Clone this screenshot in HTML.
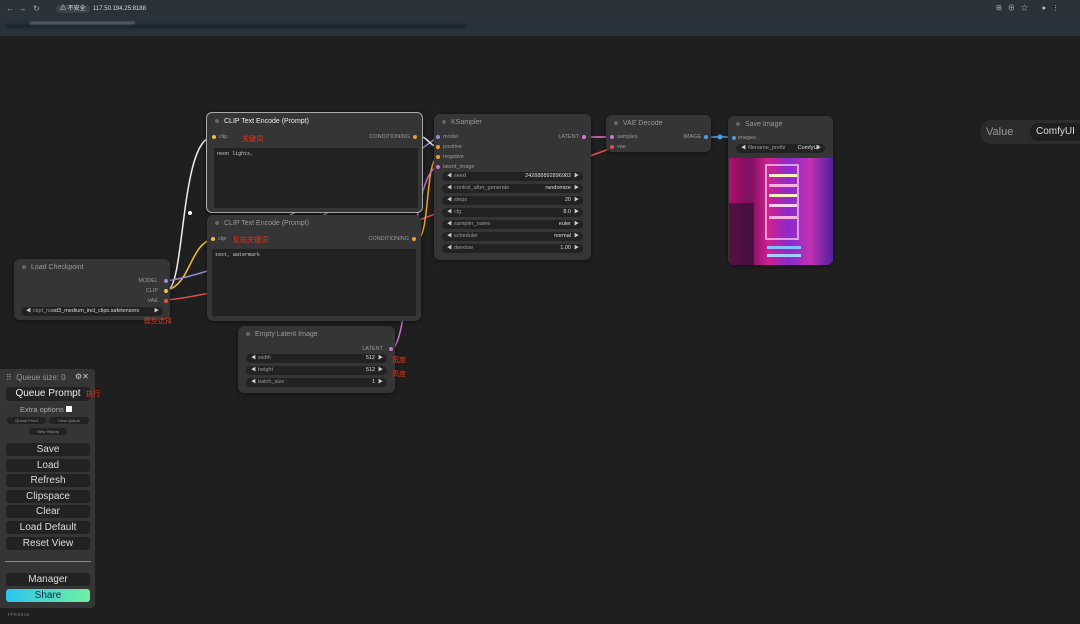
<!DOCTYPE html>
<html><head><meta charset="utf-8"><style>
*{box-sizing:border-box;margin:0;padding:0}
body{width:1080px;height:624px;overflow:hidden;background:#1f1f1f;font-family:"Liberation Sans","Noto Sans CJK SC",sans-serif;position:relative;color:#aaa}
.a{position:absolute}
.node{position:absolute;background:#353535;border-radius:6px;box-shadow:0 1px 4px rgba(0,0,0,.5)}
.t{position:absolute;left:8px;top:5px;font-size:7px;color:#999;white-space:nowrap}
.t:before{content:"";display:inline-block;width:4px;height:4px;border-radius:50%;background:#666;margin-right:5px;vertical-align:middle}
.s{position:absolute;font-size:5.5px;color:#999;white-space:nowrap}
.d{position:absolute;width:4px;height:4px;border-radius:50%}
.w{position:absolute;height:9px;background:#222;border-radius:5px;font-size:5.5px;color:#999;line-height:9px;padding:0 5px}
.w b{position:absolute;right:12px;font-weight:normal;color:#ddd}
.w:before{content:"◀";font-size:5px;margin-right:2px;color:#ccc}
.w:after{content:"▶";position:absolute;right:4px;font-size:5px;color:#ccc}
.ta{position:absolute;background:#222;font-family:"Liberation Mono",monospace;font-size:5px;color:#ccc;padding:3px}
.red{position:absolute;color:#e2361f;font-size:7px;white-space:nowrap}
.btn{position:absolute;left:6px;width:84px;height:13px;background:#222;border-radius:3px;color:#ddd;font-size:10px;text-align:center;line-height:13px}
</style></head><body>
<div class="a" style="left:0;top:0;width:1080px;height:18px;background:#2b3239"></div>
<div class="a" style="left:6px;top:4px;font-size:8px;color:#aaa">← &nbsp;→ &nbsp; ↻</div>
<div class="a" style="left:56px;top:3px;width:400px;height:12px;font-size:6px;color:#ddd;line-height:12px"><span style="background:#3b434b;border-radius:6px;padding:1px 4px">⚠ 不安全</span>&nbsp; 117.50.194.25:8188</div>
<div class="a" style="left:996px;top:3px;font-size:7px;color:#bbb;letter-spacing:6px">⊞⊕☆ ●⋮</div>
<div class="a" style="left:0;top:18px;width:1080px;height:18px;background:#27323a"></div>
<div class="a" style="left:6px;top:24px;width:460px;height:4px;background:#1c252c;border-radius:2px;filter:blur(1px)"></div>
<div class="a" style="left:30px;top:22px;width:105px;height:2px;background:#6b747b;filter:blur(1px)"></div>

<svg class="a" style="left:0;top:0" width="1080" height="624" fill="none" stroke-width="1.5">
<path d="M167 290 C185 290 180 140 212 137" stroke="#eee"/>
<path d="M167 290 C190 285 190 245 212 239" stroke="#f0c040"/>
<path d="M167 281 C260 265 350 200 438 137" stroke="#9a8ad8"/>
<path d="M167 300 C260 290 330 250 612 148" stroke="#e05050"/>
<path d="M417 136 C428 136 428 145 438 147" stroke="#eee"/>
<path d="M417 239 C430 239 425 160 438 157" stroke="#f0a030"/>
<path d="M391 349 C410 349 410 170 438 167" stroke="#d070d0"/>
<path d="M587 137 C598 137 600 137 612 137" stroke="#e070e0"/>
<path d="M707 137 L732 137" stroke="#4a9ee0"/>
<path d="M290 215 L298 211" stroke="#aac"/>
<circle cx="190" cy="213" r="2" fill="#fff" stroke="none"/>
<circle cx="720" cy="137" r="2.5" fill="#4a9ee0" stroke="none"/>
</svg>

<div class="node" style="left:206px;top:112px;width:217px;height:101px;border:1px solid #aaa">
<div class="t" style="color:#eee">CLIP Text Encode (Prompt)</div>
<div class="d" style="left:5px;top:22px;background:#f0c040"></div><div class="s" style="left:12px;top:21px">clip</div>
<div class="red" style="left:35px;top:21px">关键词</div>
<div class="s" style="right:12px;top:21px">CONDITIONING</div><div class="d" style="right:5px;top:22px;background:#f0a030"></div>
<div class="ta" style="left:7px;top:35px;width:204px;height:60px">neon lights,</div>
</div>
<div class="node" style="left:207px;top:215px;width:214px;height:106px">
<div class="t">CLIP Text Encode (Prompt)</div>
<div class="d" style="left:4px;top:22px;background:#f0c040"></div><div class="s" style="left:11px;top:21px">clip</div>
<div class="red" style="left:26px;top:20px">反向关键词</div>
<div class="s" style="right:12px;top:21px">CONDITIONING</div><div class="d" style="right:5px;top:22px;background:#f0a030"></div>
<div class="ta" style="left:5px;top:34px;width:204px;height:67px">text, watermark</div>
</div>

<div class="node" style="left:434px;top:114px;width:157px;height:146px">
<div class="t">KSampler</div>
<div class="d" style="left:2px;top:21px;background:#9a8ad8"></div><div class="s" style="left:9px;top:20px">model</div>
<div class="d" style="left:2px;top:31px;background:#f0a030"></div><div class="s" style="left:9px;top:30px">positive</div>
<div class="d" style="left:2px;top:41px;background:#f0a030"></div><div class="s" style="left:9px;top:40px">negative</div>
<div class="d" style="left:2px;top:51px;background:#d070d0"></div><div class="s" style="left:9px;top:50px">latent_image</div>
<div class="s" style="right:12px;top:20px">LATENT</div><div class="d" style="right:5px;top:21px;background:#e070e0"></div>
<div class="w" style="left:8px;top:58px;width:141px">seed<b>242888892896983</b></div>
<div class="w" style="left:8px;top:70px;width:141px">control_after_generate<b>randomize</b></div>
<div class="w" style="left:8px;top:82px;width:141px">steps<b>20</b></div>
<div class="w" style="left:8px;top:94px;width:141px">cfg<b>8.0</b></div>
<div class="w" style="left:8px;top:106px;width:141px">sampler_name<b>euler</b></div>
<div class="w" style="left:8px;top:118px;width:141px">scheduler<b>normal</b></div>
<div class="w" style="left:8px;top:130px;width:141px">denoise<b>1.00</b></div>
</div>

<div class="node" style="left:606px;top:115px;width:105px;height:37px">
<div class="t">VAE Decode</div>
<div class="d" style="left:4px;top:20px;background:#d070d0"></div><div class="s" style="left:11px;top:19px">samples</div>
<div class="d" style="left:4px;top:30px;background:#e05050"></div><div class="s" style="left:11px;top:29px">vae</div>
<div class="s" style="right:10px;top:19px">IMAGE</div><div class="d" style="right:3px;top:20px;background:#4a9ee0"></div>
</div>

<div class="node" style="left:728px;top:116px;width:105px;height:149px;overflow:hidden">
<div class="t">Save Image</div>
<div class="d" style="left:4px;top:20px;background:#4a9ee0"></div><div class="s" style="left:10px;top:19px">images</div>
<div class="w" style="left:8px;top:28px;width:89px">filename_prefix<b style="right:6px">ComfyUI</b></div>
<div class="a" style="left:1px;top:42px;width:104px;height:107px;background:linear-gradient(90deg,#b0106a 0%,#7a1060 20%,#d02090 38%,#8a2ad0 58%,#c030b0 78%,#5020a0 100%)">
<div class="a" style="left:36px;top:6px;width:34px;height:76px;border:2px solid #f8d0f0;opacity:.7"></div>
<div class="a" style="left:40px;top:16px;width:28px;height:3px;background:#fff0c0"></div>
<div class="a" style="left:40px;top:26px;width:28px;height:3px;background:#ffb0e0"></div>
<div class="a" style="left:40px;top:36px;width:28px;height:3px;background:#fff0c0"></div>
<div class="a" style="left:40px;top:46px;width:28px;height:3px;background:#ffd0f0"></div>
<div class="a" style="left:40px;top:58px;width:28px;height:3px;background:#ffb0e0"></div>
<div class="a" style="left:38px;top:88px;width:34px;height:3px;background:#80c0ff"></div>
<div class="a" style="left:38px;top:96px;width:34px;height:3px;background:#a0d0ff"></div>
<div class="a" style="left:0;top:45px;width:25px;height:62px;background:#301030;opacity:.7"></div>
</div>
</div>

<div class="a" style="left:980px;top:120px;width:110px;height:24px;background:#2c2c2c;border-radius:12px">
<span class="a" style="left:6px;top:6px;font-size:11px;color:#999">Value</span>
<span class="a" style="left:50px;top:3px;height:18px;width:60px;background:#1e1e1e;border-radius:8px;font-size:10px;color:#ddd;padding:3px 6px">ComfyUI</span>
</div>

<div class="node" style="left:14px;top:259px;width:156px;height:61px">
<div class="t">Load Checkpoint</div>
<div class="s" style="right:12px;top:19px">MODEL</div><div class="d" style="right:2px;top:20px;background:#9a8ad8"></div>
<div class="s" style="right:12px;top:29px">CLIP</div><div class="d" style="right:2px;top:30px;background:#f0c040"></div>
<div class="s" style="right:12px;top:39px">VAE</div><div class="d" style="right:2px;top:40px;background:#e05050"></div>
<div class="w" style="left:7px;top:48px;width:142px">ckpt_na<span style="color:#ddd">sd3_medium_incl_clips.safetensors</span></div>
</div>
<div class="red" style="left:144px;top:316px">模型选择</div>

<div class="node" style="left:238px;top:326px;width:157px;height:67px">
<div class="t">Empty Latent Image</div>
<div class="s" style="right:12px;top:20px">LATENT</div><div class="d" style="right:2px;top:21px;background:#d070d0"></div>
<div class="w" style="left:8px;top:28px;width:141px">width<b>512</b></div>
<div class="w" style="left:8px;top:40px;width:141px">height<b>512</b></div>
<div class="w" style="left:8px;top:52px;width:141px">batch_size<b>1</b></div>
</div>
<div class="red" style="left:392px;top:355px">宽度</div>
<div class="red" style="left:392px;top:369px">高度</div>

<div class="a" style="left:0;top:369px;width:95px;height:239px;background:#353535;border-radius:0 4px 4px 0">
<div class="a" style="left:6px;top:4px;font-size:8px;color:#999">⠿ &nbsp;Queue size: 0</div>
<div class="a" style="left:75px;top:3px;font-size:8px;color:#ccc">⚙✕</div>
<div class="a" style="left:6px;top:18px;width:84px;height:14px;background:#222;border-radius:3px;color:#eee;font-size:10px;text-align:center;line-height:14px">Queue Prompt</div>
<div class="a" style="left:20px;top:36px;font-size:7.5px;color:#aaa">Extra options <span style="display:inline-block;width:6px;height:6px;background:#fff"></span></div>
<div class="a" style="left:7px;top:48px;width:39px;height:7px;background:#222;border-radius:3px;font-size:4px;color:#999;text-align:center;line-height:7px">Queue Front</div>
<div class="a" style="left:49px;top:48px;width:40px;height:7px;background:#222;border-radius:3px;font-size:4px;color:#999;text-align:center;line-height:7px">View Queue</div>
<div class="a" style="left:29px;top:59px;width:38px;height:7px;background:#222;border-radius:3px;font-size:4px;color:#999;text-align:center;line-height:7px">View History</div>
</div>
<div class="red" style="left:86px;top:389px">执行</div>
<div class="btn" style="top:443px">Save</div>
<div class="btn" style="top:459px">Load</div>
<div class="btn" style="top:474px">Refresh</div>
<div class="btn" style="top:490px">Clipspace</div>
<div class="btn" style="top:505px">Clear</div>
<div class="btn" style="top:521px">Load Default</div>
<div class="btn" style="top:537px">Reset View</div>
<div class="a" style="left:5px;top:561px;width:86px;height:1px;background:#888"></div>
<div class="btn" style="top:573px">Manager</div>
<div class="btn" style="top:589px;background:linear-gradient(90deg,#2cc4f0,#70f0a0);color:#124">Share</div>
<div class="a" style="left:8px;top:612px;font-size:4.5px;color:#777">FPS:59.52</div>
</body></html>
